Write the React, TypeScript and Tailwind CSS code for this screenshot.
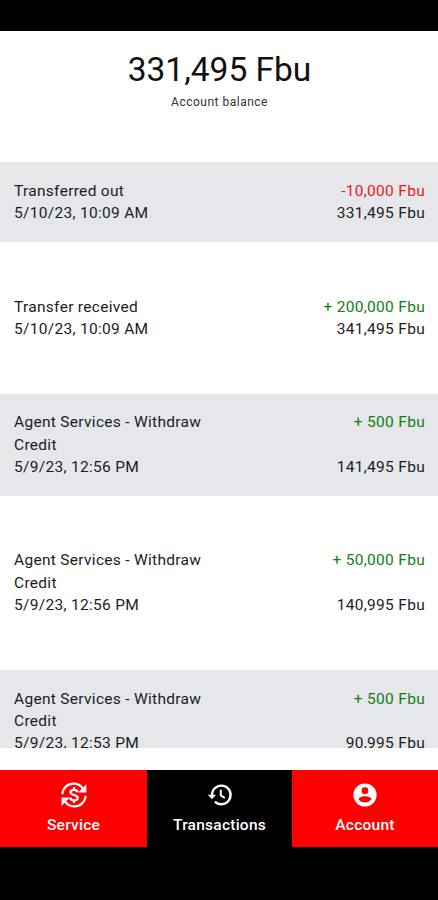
type Transaction = {
  title: string;
  date: string;
  amount: string;
  balance: string;
  debit?: boolean;
};

const transactions: Transaction[] = [
  { title: "Transferred out", date: "5/10/23, 10:09 AM", amount: "-10,000 Fbu", balance: "331,495 Fbu", debit: true },
  { title: "Transfer received", date: "5/10/23, 10:09 AM", amount: "+ 200,000 Fbu", balance: "341,495 Fbu" },
  { title: "Agent Services - Withdraw Credit", date: "5/9/23, 12:56 PM", amount: "+ 500 Fbu", balance: "141,495 Fbu" },
  { title: "Agent Services - Withdraw Credit", date: "5/9/23, 12:56 PM", amount: "+ 50,000 Fbu", balance: "140,995 Fbu" },
  { title: "Agent Services - Withdraw Credit", date: "5/9/23, 12:53 PM", amount: "+ 500 Fbu", balance: "90,995 Fbu" },
];

function ExchangeIcon() {
  return (
    <svg width="28" height="28" viewBox="0 0 28 28" fill="none" stroke="currentColor">
      <path d="M2.4 13.2C2.6 7 7.6 2.6 13.6 2.6c4 0 7 1.8 9 4.6" strokeWidth="2.2" />
      <path d="M26.4 3.2v8.2h-8.4z" fill="currentColor" stroke="none" />
      <path d="M25.6 14.8C25.4 21 20.4 25.4 14.4 25.4c-4 0-7-1.8-9-4.6" strokeWidth="2.2" />
      <path d="M1.6 24.8v-8.2h8.4z" fill="currentColor" stroke="none" />
      <path d="M14 6v2.6M14 19.4V22M17.6 11.1c-.5-1.6-1.8-2.3-3.6-2.3-2 0-3.5.9-3.5 2.5 0 3.6 7.2 1.8 7.2 5.4 0 1.6-1.5 2.6-3.7 2.6-2.1 0-3.5-.9-3.9-2.6" strokeWidth="2.2" />
    </svg>
  );
}

function HistoryIcon() {
  return (
    <svg width="28" height="28" viewBox="0 0 28 28" fill="none" stroke="currentColor">
      <path d="M6 14a9.3 9.3 0 1 1 2.8 6.6" strokeWidth="2.4" />
      <path d="M1.8 13.7h8.2l-4.1 4.5z" fill="currentColor" stroke="none" />
      <path d="M14.8 8.8v5.6l4 2.6" strokeWidth="2" />
    </svg>
  );
}

function AccountIcon() {
  return (
    <svg width="28" height="28" viewBox="0 0 28 28" fill="currentColor" fillRule="evenodd">
      <path d="M14 2.4a11.6 11.6 0 1 0 0 23.2a11.6 11.6 0 1 0 0-23.2zM14 6.3a3.4 3.4 0 1 1 0 6.8a3.4 3.4 0 1 1 0-6.8zM14 15.2c3.2 0 6.5 1.4 6.5 3.1c-1.4 2-3.7 3.3-6.5 3.3s-5.1-1.3-6.5-3.3c0-1.7 3.3-3.1 6.5-3.1z" />
    </svg>
  );
}

function Row({ item, shaded }: { item: Transaction; shaded: boolean }) {
  return (
    <li className={`flex shrink-0 justify-between pt-[17.8px] pr-[13px] pb-[17.5px] pl-[14px] ${shaded ? "bg-[#e5e7eb]" : "bg-white"}`}>
      <div className="w-[200px]">
        <p>{item.title}</p>
        <p>{item.date}</p>
      </div>
      <div className="flex flex-col justify-between text-right">
        <p className={item.debit ? "text-[#f01616]" : "text-[#118011]"}>{item.amount}</p>
        <p>{item.balance}</p>
      </div>
    </li>
  );
}

export default function App() {
  return (
    <div className="flex h-[900px] w-full flex-col overflow-hidden bg-white font-['Roboto',sans-serif] text-[#1c1c1e]">
      <div className="h-[31px] shrink-0 bg-black" />
      <header className="h-[131px] shrink-0 pt-[18px] pl-px text-center">
        <h1 className="text-[33.5px] leading-[42px] text-[#111]">331,495 Fbu</h1>
        <p className="mt-[3px] text-[12px] leading-[16px] tracking-[0.5px] text-[#333]">Account balance</p>
      </header>
      <ul className="flex h-[586px] shrink-0 flex-col gap-[35.9px] overflow-hidden text-[15.5px] leading-[22.3px] tracking-[0.3px]">
        {transactions.map((item, i) => (
          <Row key={i} item={item} shaded={i % 2 === 0} />
        ))}
      </ul>
      <nav className="mt-[22px] grid h-[77px] shrink-0 grid-cols-[147px_145px_1fr] text-[15.5px] leading-[20px] font-medium tracking-[0.25px] text-white">
        <a className="flex flex-col items-center bg-[#ff0000] pt-[11px]">
          <ExchangeIcon />
          <span className="mt-[6px]">Service</span>
        </a>
        <a className="flex flex-col items-center bg-black pt-[11px]">
          <HistoryIcon />
          <span className="mt-[6px]">Transactions</span>
        </a>
        <a className="flex flex-col items-center bg-[#ff0000] pt-[11px]">
          <AccountIcon />
          <span className="mt-[6px]">Account</span>
        </a>
      </nav>
      <div className="grow bg-black" />
    </div>
  );
}
